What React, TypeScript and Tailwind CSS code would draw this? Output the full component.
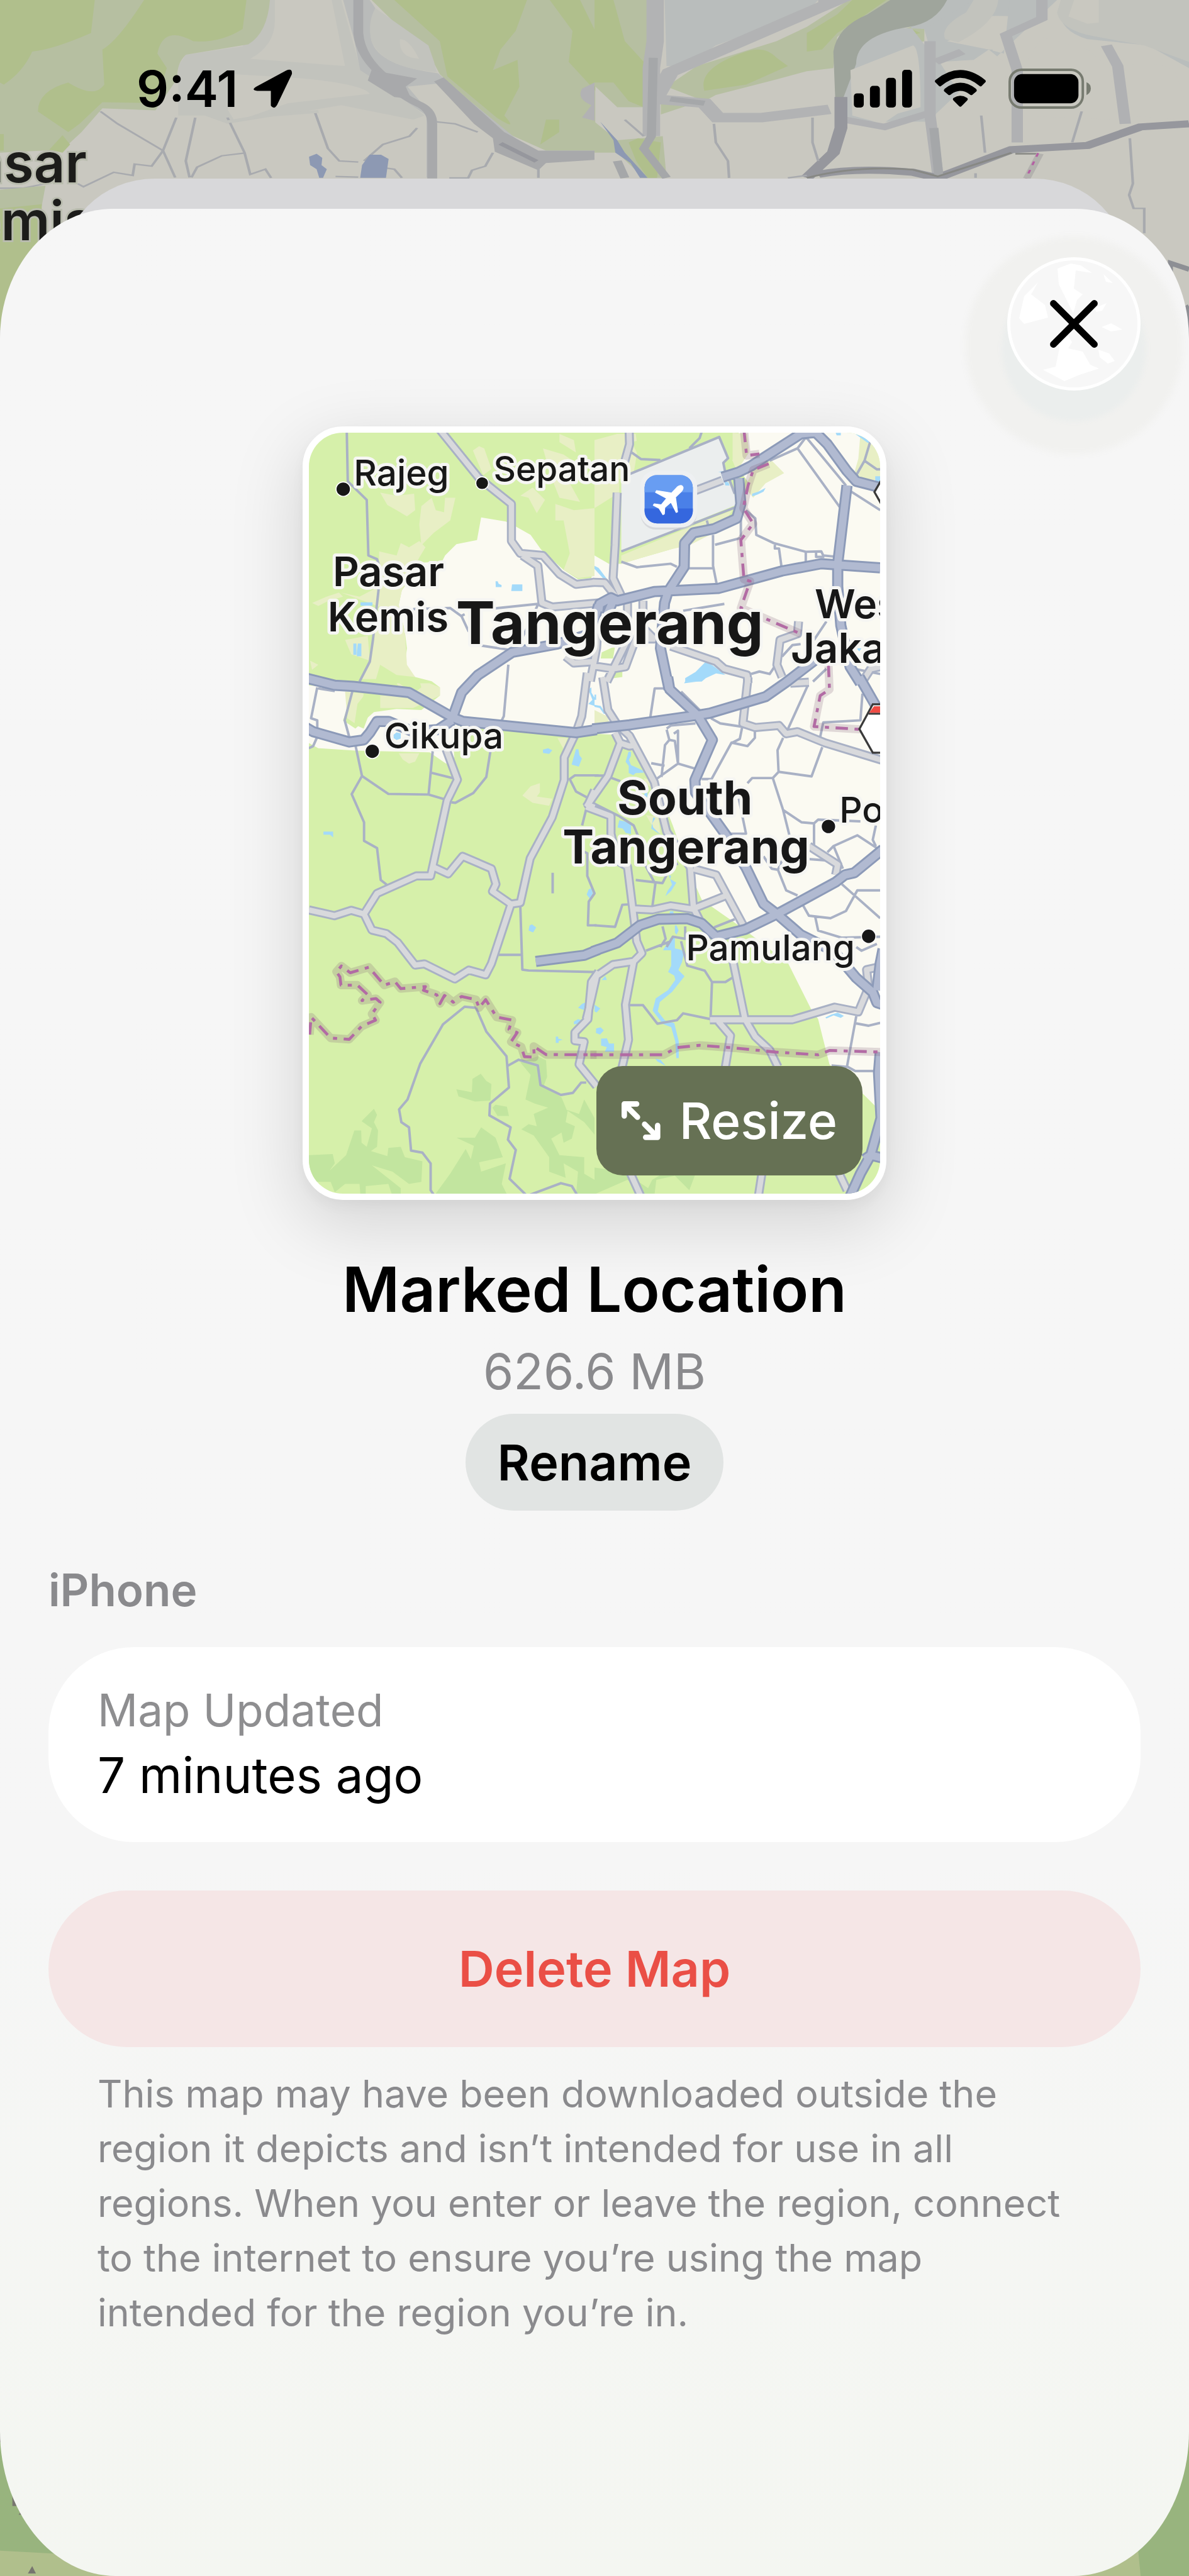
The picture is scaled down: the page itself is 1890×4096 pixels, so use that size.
import { X } from "lucide-react";

interface Tile {
  x: number;
  y: number;
  lanes?: string;
  streets?: string;
  highways?: string;
  border?: string;
  water?: string;
}

// The map is split into six tiles, each with its own origin.
const tiles: Tile[] = [
  {
    x: 0,
    y: 0,
    lanes:
      "M238 40L243 290L335 380L343 650L385 668L395 700L392 820L365 1060L350 1165L300 1262M560 910L740 905L795 945L830 1020M790 945l20-10M880 1070L895 1088L1030 1108M945 908L1165 885M1165 890L1080 1070M1022 1180L1015 1260L1000 1430L985 1460",
    streets:
      "M690 40L880 275L1037 400V580L1080 640L1190 650L1270 740L1350 790L1440 780M1090 650L1165 700L1185 880L1235 900L1460 880M1300 1140L1340 1172L1440 1165",
    highways: "M750 1440L795 1315L875 1230L1040 1120L1260 1080L1420 1030L1460 890",
    water:
      "M960 775l10 0l5 12l14 6v10h-28zM1040 790h50v32h-54zM305 877h58v16h-58zM270 1077h15v55h-15zM292 1077h17v62h-22v-20z",
  },
  {
    x: 1440,
    y: 0,
    lanes:
      "M170 255L605 75L648 178L625 200L635 250M130 630L700 410M180 150L225 182L320 187M520 50L510 80L460 130M850 190L985 130L1030 70M985 130L1190 415M1030 80L1220 310M1340 90L1310 190L1270 260M1310 190L1370 232H1386M1245 340L1386 430M575 550V700L595 800M545 480l8 30M585 598L710 565M710 430V560M735 430L780 470L785 550L870 590L1025 632L1100 630L1110 650L1160 655M875 598v18h20L908 710M1025 632V690M1075 635v22h40M130 680L205 707L370 690L400 705M450 712H575M430 918L630 885M1125 970L1065 1060M910 1140L960 1085L1000 1080M760 1225L800 1213L850 1225L880 1180M1125 1200L1060 1262M1260 1200L1386 1225M650 270L680 350",
    streets:
      "M168 40L170 110L145 200M110 345L100 600L90 760L130 845M-10 780L50 782L100 845M490 335L620 285M370 1090L590 1165L630 1200L740 1230L745 1270M990 970L985 1030L900 1060L885 1180L910 1240M235 870V1000L290 1055H200L150 1190L90 1200L-10 1185M160 880V1060L60 1262M20 940L10 1100L-20 1260M1386 1190L1340 1200L1300 1262",
    highways:
      "M360 820L435 705L437 590L480 540L580 520L690 470L710 400L700 275M620 270L700 245L760 215L1000 60L1100 50M1060 40L1130 110L1225 240L1270 290L1386 320M1225 310L1205 480L1180 690V800L1195 990L1240 1190L1290 1270M20 920L25 885L80 855L110 870L290 825L600 810L910 725L1100 690L1386 710M360 815L340 880L320 1100L362 1300M90 870L60 940",
    border:
      "M725 40L738 165L800 157M845 205L770 235L745 310L722 420L770 495L710 575L725 765L755 775L710 905L1000 1030M1135 1180L1140 1300L1095 1330L1065 1480L1290 1494",
    water:
      "M0 700L20 710L65 770H50L0 715ZM1170 55h25v12h-20zM1265 60l80 30l10 15l-30-2zM1362 265h24v28h-24zM765 350l30-10l35-18l-10 18l-30 15l-25 8zM600 245l40-8v12zM630 290l20 5l5 15h-20zM440 1245L490 1215L540 1165L575 1185L635 1230L590 1222L540 1245L520 1262H440ZM1270 1100h25l-10 15z",
  },
  {
    x: 0,
    y: 1260,
    lanes:
      "M95 30L65 180L95 190V270L75 315L54 325M100 35L180 48M265 50L228 190L250 270M280 310L312 460L440 547L635 550L720 575M312 460L262 548L322 685V775L385 810L403 965L435 990M655 340L635 550M650 445L760 472M935 340L915 465L852 543L765 590L745 588M1237 930V1030M1460 457H1345L1320 475L1350 535L1405 565M1400 620L1380 700M1385 825L1405 835V945L1440 1030L1412 1070L1408 1185H1450M1080 1090L1090 1400L1120 1404L1460 1412M975 1328H1088",
    streets:
      "M720 330L775 478L725 580L645 945H575L385 1030L322 1130L260 1112L178 1138L54 1110M322 1130L360 1208L430 1225L485 1268L570 1378L615 1372L762 1445L830 1402L912 1425L940 1370L1035 1082M655 900L730 935L800 850L940 910L962 985L945 1020L1035 1082L1080 1075L1128 860L1235 660L1293 480V370L1350 250L1378 170L1405 -40M1440 530L1408 600L1440 612",
    highways:
      "M40 -15L180 20L270 25L540 55L750 175L800 195L1350 250L1450 235M40 225L75 245L250 295L320 285L350 250L385 195L440 195L560 245L680 235L750 190M1155 1360L1390 1330L1460 1302",
    water:
      "M465 260l15-12l20 5v25l-20 8l-15-10zM1190 332l25-7l20 10l-15 18l-30-5zM1350 330h12l5 30l12 15l-15 40l-35-10zM1410 40l15-10v25l15 25v40l-30-10l20-20zM125 730h47v28l-15-13h-32zM1412 1010l12-5l8 25l-15 25l-15-20zM1125 1185l12-5l20 15l-15 25l-22-10z",
  },
  {
    x: 1440,
    y: 1260,
    lanes:
      "M270 180L292 35H345M420 50L510 140M350 230L370 215L490 205M350 235L363 285L342 310L325 465M363 285L390 290L405 400M405 400V240L385 255M405 400L300 475M405 400L490 425M275 398L340 410M565 180L610 205L710 220M718 215L705 280L665 300M778 235V275L742 315L665 298L568 475H520M935 240L1035 20M1300 60L1290 190L1110 200L1095 270M915 275L888 335L893 440L1053 462L1105 320M893 440L865 470H765L742 495M865 470L915 625L945 745M915 625L1005 685L1065 690V800M1065 690L1085 672L1290 680M1365 700L1350 770L1365 800M1130 830L1160 800L1275 748L1386 820M1160 800L1205 910M700 570L735 740H650M890 915L930 1015L985 1040M1000 860L1130 870M820 850L860 910L890 915L910 870M1200 985L1386 1150M1386 1015H1275L1220 1115L1145 1150L1040 1138L1010 1085M1070 1140L1085 1210L1200 1245L1386 1240M0 458H60M70 465L125 485M0 595L120 655L190 700L215 760M245 890L295 985L280 1100M200 965L330 980L370 900L405 885M0 1185L100 1192L135 1085L190 1082M330 1190L345 1250L320 1290M440 1190V1250L380 1240L350 1290M580 1195L680 1155M370 1262L250 1308M420 1262L450 1380L535 1405L570 1460H635L675 1435M570 1460L563 1640L430 1612L400 1645L305 1662L235 1572H170",
    streets:
      "M40 -20L65 140L110 210L170 265L290 490L350 730L465 905L480 1100L515 1170M-40 610L65 460L125 300L100 250M125 300L170 315L200 310M-40 610L80 655V740L110 870L160 900L185 1100L205 1262L230 1320L190 1360L150 1570L165 1740L130 1890M480 910L590 940L730 1200M490 1100L640 1040M190 1105L280 1110L370 1090L500 1110M745 -20L720 205L780 225L895 215L930 255L985 245L1120 300L1400 385M950 10L1040 5M1040 800L1180 890L1170 940M190 1360L90 1375L10 1430L-15 1540L-40 1640",
    highways:
      "M355 -20L365 40L500 165L572 285L487 480L490 540L640 750L735 905L820 1080L885 1130L1000 1230L1160 1310L1270 1440L1350 1510L1370 1560L1400 1570M-10 232L170 212L500 165L560 155L830 75L930 5L1080 -110M1285 -20L1365 120M-10 1312L110 1270L220 1185L310 1155L450 1152L520 1175L590 1240L730 1205L885 1130L1170 975L1215 940L1260 930L1400 815",
    water:
      "M165 342h12v20l-10 20l10 25l55 25l8 12l-40 2l-12 10l-22-10v-35l-15-20zM0 115l30 5l25 38h-10l-20-28l-25-5zM0 65h8v25h-8zM245 540h12v25l-18-10zM120 675l25 5l32 12v50l-25-5l-15-22l-25-5zM285 660l10 5l-15 25l5 20l35 35l-45-30zM360 940l12 5l-5 15l30 18l-25 40l-28 25l10-25l22-30zM365 1117h18v18h-18zM390 1185l8 0l10 25l-10 20l-8-10zM370 1245l20-8v60l25 5l20 10l-10 50l-18 40l30 30l-60 75l-60 50l-10 45l35 45l45 12l22 90v80h-12l-5-80l-20-70l-40-15l-50-65l15-60l60-40l35-50l-5-20l-30-18l15-30v-75h-40zM510 0h-70l-5 10z",
  },
  {
    x: 0,
    y: 2520,
    lanes:
      "M865 325L810 320L705 405L595 595L533 770L492 818L503 880L540 905L550 1018L605 1028L645 1080V1210L665 1240M865 325L915 440L1013 560L1025 712L933 790L930 847L1033 905L1020 965L1058 1015L1028 1155L1115 1240M1018 607L1072 577L1165 605L1178 700L1277 748L1335 738L1375 688H1400M1120 1235L1277 1176L1330 1190L1360 1240",
    streets: "M1460 150L1425 200L1408 380L1345 445V485L1390 490L1365 600L1450 705",
    border:
      "M58 455L65 370L160 472L250 478L310 415L378 385L360 355L400 298L380 280L312 290L340 262L290 215H210L205 175L188 150L212 122L255 155L345 128L420 215L472 198L500 232L620 222L610 240L675 262L690 305L712 265L755 298L795 270L865 285L880 325L912 285L965 370L1040 385L1025 430L1065 445L1035 490L1085 515L1100 562L1148 565L1145 512L1205 552L1450 553",
    water:
      "M1360 325l20-20l15-5v15l-8 20zM1340 392l20-12l15 5l-15 18l-20 2zM1252 465h12v10l22 5l-20 5v10h-14z",
  },
  {
    x: 1440,
    y: 2520,
    lanes:
      "M1270 30L1295 48L1370 15M1386 398L1330 412L1265 400M1270 365L1225 610L1265 632L1386 632M1150 605L1225 612M0 150L20 160L0 200",
    streets:
      "M670 90L730 380L780 465L850 530L890 612M560 383H960L1165 322L1280 345L1330 225L1320 140L1386 125M600 390L660 460L635 612M175 1130L225 1240M812 1130L795 1240M1185 1125L1225 1210",
    highways:
      "M1400 40L1386 110L1370 240M1386 540L1378 640L1390 860L1340 1040L1290 1130L1240 1240M1310 1060L1340 1040L1400 1055",
    border:
      "M-20 553H335L400 518L510 507L680 520L880 540L1085 553L1140 532L1400 540",
    water:
      "M35 190h25l-8-20zM0 310l28 18l-18 20l-10-5zM8 425l22-5l15 15l-18 20l-20-8zM32 475l28-2l10 25h25v40h-45l10-22l-28-8zM295 572l25 5l25 30l-40-22zM1120 372l30-15l30-8l30 15l-15 10l-35-12l-35 15zM1350 195l36 25v12zM1340 150l45-5v18z",
  },
];

const greens =
  "M890 465L1010 485L1060 510L1130 550L1180 620L1290 720L1360 765L1425 760L1440 650L1510 690L1570 690L1810 620L1900 590L2030 520L2140 440L2190 300L2110 190L2140 54H2850V3420L2800 3320L2740 3260L2580 3120L2550 3000L2525 2900L2490 2850L2380 2630L2160 2460L1960 2320L1890 2160L1820 1960L1740 1760L1690 1700L1630 1600L1570 1570L1540 1520L1440 1515L1350 1515L790 1460L750 1500L760 1630L720 1660L640 1605L280 1597L100 1585L54 1560V1280L270 1300L220 1450L280 1490L370 1410L480 1395L600 1400L690 1330V1290L650 1260L570 1240L520 1180L530 1100L520 1020L490 890L505 820L600 685L700 680L715 650L770 595L870 575Z";

const beiges =
  "M400 345L480 360L565 350L570 430L530 460L480 430L435 405ZM600 410L650 370L670 430L710 440L715 370L765 370L740 480L660 540L600 600L590 500ZM395 630L480 650L500 590L540 610L590 580L620 610L590 660L505 820L490 890L520 1020L530 1180L570 1240L480 1230L400 1180L380 1250H300L350 1165L365 1060L400 900L210 830L300 850L395 800ZM850 140L880 120L905 130L940 230L900 260ZM1270 60L1340 90L1350 150L1270 100ZM1190 130L1290 160L1350 200L1320 300L1370 390L1270 370L1230 270ZM1080 360L1140 320L1200 380L1160 445L1120 370ZM1250 400L1340 430L1440 420V750L1360 760L1290 720L1320 640L1290 480H1250ZM70 880L140 850L200 830L220 850L150 870L100 895ZM230 1060L340 1040L350 1160L260 1130ZM60 1160L100 1180L70 1205ZM1440 90L1550 60L1640 60L1650 130L1630 250L1560 280L1560 345L1440 420ZM1570 650L1810 550L1980 480L2110 430L2040 530L1900 600L1810 620L1570 690ZM2110 54L2180 60L2190 150L2130 240L2110 190ZM2230 190H2300L2360 250L2270 300L2210 370L2170 320ZM2730 60L2826 150V280L2760 290L2700 250L2720 180ZM1440 1400L1500 1430L1520 1480L1440 1470ZM230 1310L320 1320L300 1480L240 1440ZM400 1330L520 1330L480 1270H640L690 1290V1330L560 1390L400 1390ZM490 1610H590L570 1650L540 1660L510 1640ZM1260 1535H1310L1290 1590ZM1090 1815L1130 1770L1175 1755V1800L1160 1820L1235 1830L1220 1865L1140 1850ZM1680 1730L1715 1740L1740 1790L1690 1760ZM1690 1910L1750 1920L1760 2000L1730 1980Z";

const woods =
  "M770 3240L845 3255L848 3190L888 3165L915 3200L940 3215L935 3295L860 3300L780 3275ZM770 3475L860 3475L890 3425L960 3475L995 3570L880 3595L890 3640L1010 3600L990 3700L1020 3760H660L740 3650L815 3530L840 3580L855 3515ZM54 3560L170 3555L180 3600L155 3635L235 3560L275 3440H308L310 3500L335 3520L360 3430L310 3395L370 3335L385 3365L370 3400L390 3440L385 3520L355 3540L435 3565L440 3525L500 3520L520 3570L605 3590L600 3690L540 3700L460 3640L360 3610L500 3720V3760H460L440 3700L330 3710V3760H305L300 3700H230L180 3740L160 3690H90L54 3650ZM1080 3110L1165 3080L1205 3100L1210 3180L1195 3220L1280 3280L1305 3340L1365 3360L1390 3290L1440 3380V3460L1390 3400L1310 3345L1300 3400L1345 3420L1330 3480L1290 3500L1280 3450L1230 3480L1270 3560L1390 3570V3650L1440 3680V3760H1350L1360 3640L1290 3600L1300 3670L1220 3640V3570L1170 3500L1145 3465L1085 3435L1120 3410L1160 3420L1145 3360L1215 3330L1150 3310L1105 3290L1130 3170ZM945 3330L960 3315L1015 3325L1025 3370H970ZM1440 3620L1580 3640L1700 3720L1720 3680L1770 3650H1930L1900 3730L1830 3660L1740 3680L1730 3760H1700L1600 3680L1440 3750Z";

const places = [
  { name: "Rajeg", x: 272, y: 310, size: 173, weight: 500 },
  { name: "Sepatan", x: 950, y: 290, size: 168, weight: 500 },
  { name: "Pasar", x: 170, y: 800, size: 198, weight: 600 },
  { name: "Kemis", x: 145, y: 1018, size: 198, weight: 600 },
  { name: "Tangerang", x: 768, y: 1080, size: 284, weight: 700 },
  { name: "Wes", x: 2508, y: 955, size: 194, weight: 600 },
  { name: "Jakarta", x: 2392, y: 1170, size: 200, weight: 600 },
  { name: "Cikupa", x: 420, y: 1585, size: 173, weight: 500 },
  { name: "South", x: 1550, y: 1908, size: 228, weight: 700 },
  { name: "Tangerang", x: 1285, y: 2146, size: 228, weight: 700 },
  { name: "Pondok", x: 2628, y: 1945, size: 173, weight: 500 },
  { name: "Pamulang", x: 1884, y: 2614, size: 173, weight: 500 },
];

const dots = [
  [221, 328, 35],
  [895, 299, 31],
  [362, 1600, 35],
  [2575, 1965, 35],
  [2770, 2498, 35],
];

function Roads({ kind, color, width }: { kind: "lanes" | "streets" | "highways"; color: string; width: number }) {
  return (
    <g fill="none" stroke={color} strokeWidth={width} strokeLinejoin="round">
      {tiles.map((tile) => (
        <path key={`${tile.x}-${tile.y}`} d={tile[kind]} transform={`translate(${tile.x} ${tile.y})`} />
      ))}
    </g>
  );
}

function RegionMap() {
  return (
    <svg
      className="block size-full"
      viewBox="54 54 2772 3693"
      preserveAspectRatio="xMidYMid slice"
      role="img"
      aria-label="Tangerang"
    >
      <rect width="2900" height="3800" fill="#d6f0aa" />
      <path d={greens} fill="#fbfaf2" />
      <path d={beiges} fill="#e8efc5" />
      <path d={woods} fill="#c2e59f" />
      <path d="M1570 270L2045 75L2088 178L2065 200L2080 270L2140 400L1570 630Z" fill="#ebeeee" />
      <path d="M1620 100L1780 60H1960L1940 110L1780 170L1660 180ZM1970 2350L2060 2400L2130 2450L2020 2470ZM1475 1120L1540 1090L1530 1150H1470ZM1520 1190L1575 1180V1240L1500 1250ZM290 1370L330 1320L400 1330V1390L350 1410L320 1490L275 1470ZM480 1260L590 1255L600 1290L560 1320Z" fill="#d6f0aa" />
      {tiles.map((tile) => (
        <path key={`${tile.x}-${tile.y}`} d={tile.water} transform={`translate(${tile.x} ${tile.y})`} fill="#a3dafa" />
      ))}
      <Roads kind="lanes" color="#a9b1c5" width={12} />
      <Roads kind="streets" color="#a9b1c5" width={44} />
      <Roads kind="streets" color="#d8d9dc" width={26} />
      <Roads kind="highways" color="#8c9ab8" width={54} />
      <Roads kind="highways" color="#b1bad1" width={36} />
      <g fill="none" strokeLinejoin="round">
        {tiles.map((tile) => (
          <g key={`${tile.x}-${tile.y}`} transform={`translate(${tile.x} ${tile.y})`}>
            <path d={tile.border} stroke="#78506e" strokeOpacity="0.2" strokeWidth="40" />
            <path d={tile.border} stroke="#b26ba4" strokeWidth="14" strokeDasharray="60 32 20 32" />
          </g>
        ))}
      </g>

      {/* road shields */}
      <g stroke="#3a3a3a" strokeWidth="10" fill="#fff">
        <path d="M2840 1372H2790L2725 1492L2790 1607H2840Z" />
        <path d="M2840 270L2798 342L2840 415Z" />
      </g>
      <path d="M2826 1382H2796L2772 1414H2826Z" fill="#ef4b44" />
      <path d="M2770 1418H2826" stroke="#3a3a3a" strokeWidth="9" />

      {/* airport */}
      <rect x="1664" y="242" width="272" height="282" rx="74" fill="#c9cbd0" opacity="0.6" />
      <rect x="1662" y="238" width="276" height="276" rx="76" fill="#eef0f2" />
      <rect x="1683" y="260" width="234" height="234" rx="60" fill="#4a80e8" />
      <path d="M1683 343V320a60 60 0 0 1 60-60h114a60 60 0 0 1 60 60v23z" fill="#689df2" />
      <path d="M1683 422v12a60 60 0 0 0 60 60h114a60 60 0 0 0 60-60v-12z" fill="#3567de" />
      <path
        transform="translate(1440 0)"
        d="M427 314c-7-7-18-4-27 5L374 347L301 335L296 344L350 373L324 404L290 399L285 406L313 421L332 452L339 448L341 417L371 391L396 441L403 438L393 367L420 341C429 332 433 320 427 314Z"
        fill="#fff"
        stroke="#fff"
        strokeWidth="4"
        strokeLinejoin="round"
      />

      {dots.map(([x, y, r]) => (
        <circle key={`${x}-${y}`} cx={x} cy={y} r={r} fill="#171717" stroke="#fff" strokeWidth="5" />
      ))}
      <g
        fill="#171717"
        stroke="#f6f6f3"
        strokeWidth="30"
        strokeLinejoin="round"
        paintOrder="stroke"
        fontFamily="Inter, 'Liberation Sans', sans-serif"
      >
        {places.map((place) => (
          <text key={`${place.name}-${place.y}`} x={place.x} y={place.y} fontSize={place.size} fontWeight={place.weight}>
            {place.name}
          </text>
        ))}
      </g>
    </svg>
  );
}

function Backdrop() {
  return (
    <svg
      className="absolute inset-0 size-full"
      viewBox="0 0 1920 4162"
      preserveAspectRatio="xMidYMin slice"
      aria-hidden="true"
    >
      <rect width="1920" height="2000" fill="#c9c8c0" />
      <rect y="2000" width="1920" height="2162" fill="#98b47e" />
      <path d="M0 4162V4120L90 4125L160 4162ZM95 4122L120 4112L210 4162H95ZM1700 4162L1835 4090L1842 4162Z" fill="#b0bf8c" />
      <path d="M1715 4140L1730 4175" stroke="#96979d" strokeWidth="16" />
      <path d="M1620 4162L1665 4155V4162ZM310 4162L400 4160V4162Z" fill="#8d99b3" />
      <path d="M0 3925L7 3930V3945H0ZM20 4030L30 4048H20ZM42 4048L46 4062H30ZM52 4145L58 4157H45Z" fill="#77756f" />
      <g transform="scale(.61224 .33333)" fill="none">
        <path d="M470 320L490 265L640 225L710 0H900L950 330L1060 470L1120 560L1090 580L900 510L600 600L540 560L470 560Z" fill="#c2c3bd" />
        <path d="M725 0H875L910 320L660 285Q725 220 725 100ZM600 530L620 360L800 380Q960 410 975 455L760 500L620 590Z" fill="#c9c8c0" />
        <path d="M0 0H712Q705 160 655 215L490 265Q465 310 468 380L410 535L270 525L215 640L165 725L0 740Z" fill="#b6bfa1" />
        <path d="M0 0H250L240 160Q140 240 85 250Q60 350 10 410L0 400ZM380 0H650L640 140Q580 210 510 200Q430 120 415 260L440 330L410 500L270 495L210 600L180 640L100 540Q100 440 180 400Q250 480 275 410L270 240Q310 200 380 0ZM0 650H10V730H0ZM130 725L165 655L185 700L165 740Z" fill="#b0bf8c" />
        <path d="M980 0L1140 290L1160 360L1330 640L1440 730H1570V0Z" fill="#b6bfa1" />
        <path d="M1040 0H1390L1360 150L1320 240L1300 340L1365 290L1370 420L1330 560Q1370 640 1310 570L1180 370L1160 200ZM1450 0H1530L1570 150V440L1500 300L1510 150ZM1440 580H1475V640L1425 700Z" fill="#b0bf8c" />
        <path d="M905 0H975L990 40Q970 120 980 200Q1000 320 1155 355L1330 640L1420 760L1180 400L1075 420L1140 560V860H1125V560L1000 400L950 340L935 200Z" fill="#b9bbba" />
        <path d="M990 40L1130 220L1145 300L1152 350Q1010 330 980 200Q968 110 990 40Z" fill="#c2c3bd" />
        <path d="M1055 190Q1080 190 1105 285Q1050 280 1055 190Z" fill="#c9c8c0" />
        <path d="M945 0V160Q950 280 1020 380Q1040 450 1110 510Q1140 540 1140 600V865" stroke="#a8a9ab" strokeWidth="26" />
        <path d="M980 340L1100 380L1070 420L1085 480L1040 470L970 390ZM1145 395L1170 375L1330 640L1420 730H1568V775L1440 790L1420 825L1305 735L1300 670L1250 600Z" fill="#a8a9ab" />
        <path d="M1320 695L1415 782" stroke="#96979d" strokeWidth="16" />
        <path d="M265 540L310 600L430 730L462 860M465 570L430 730L400 805L355 795L350 850L300 835L220 905L205 890M0 912H60L120 890M515 570L490 780L500 860M600 570L645 740L660 845L700 820L715 862M645 742L585 755L520 810L505 860M830 540L865 720L895 780L945 785M1100 620L1080 660L1010 700L960 780M885 855L945 858M1020 815L1040 820L1060 862M1185 862H1235L1245 825L1280 805L1300 740M1420 820V862M1150 590L1200 600L1260 640" stroke="#a8aaae" strokeWidth="7" />
        <path d="M600 590L700 560L840 540" stroke="#c2c3bd" strokeWidth="14" />
        <path d="M815 760L835 745L850 765L848 800L862 820L852 862H842L835 820L818 800ZM955 800L975 750L1005 750L1025 770L1018 862H950Z" fill="#8d99b3" />
        <path d="M0 920L120 900L110 1000L0 1020Z" fill="#b6bfa1" />
        <path d="M0 1010L110 990V1200L0 1260Z" fill="#b0bf8c" />
        <path d="M0 1180H110V1600H0Z" fill="#b0bf8c" />
        <path d="M1535 430Q1520 480 1560 510L1535 570L1568 585V400Z" fill="#b2b2b4" />
      </g>
      <g transform="translate(960 0) scale(.61224 .33333)" fill="none">
        <path d="M0 0H140V520H60L0 415ZM0 590L60 680L180 660L190 862H130L60 740H0Z" fill="#b6bfa1" />
        <path d="M0 0H50L80 200L130 300V520L90 490L50 400L0 400ZM115 670L175 690L170 780L165 862H140L110 780L90 690Z" fill="#b0bf8c" />
        <path d="M185 0H590L560 60L320 220L240 320L190 320Z" fill="#b9bdbc" />
        <path d="M670 0H780Q760 60 700 90L640 180L630 330L560 345L480 385L320 460L290 490L190 420L270 320L480 200L560 130ZM690 300Q690 200 835 130L870 140V200L780 240ZM175 500L210 495L240 515L175 555Z" fill="#b6bfa1" />
        <path d="M680 0H770L700 90L640 160L600 240L560 250V160L640 70ZM290 440Q270 330 400 250Q450 220 480 280L510 320L400 410ZM700 250Q730 180 835 140L860 160Q760 200 700 270Z" fill="#b0bf8c" />
        <path d="M780 0H1120L1110 80Q930 60 920 170Q920 220 980 240L1050 240V330H900L870 140L800 135Q640 200 645 480Q650 600 720 590H890L880 240Z" fill="#b9bdbc" />
        <path d="M890 570L885 240L870 140L1000 0H1060Q1060 120 930 200L1040 240L1080 260L1095 0H1230Q1210 140 1300 190L1460 220L1568 330V0H1220V0Z" fill="#b9bdbc" />
        <path d="M780 0H930Q900 110 830 130Q690 170 690 310L655 480H635L630 250Q640 130 720 70Z" fill="#9fa59c" />
        <path d="M1230 0H1568V300L1450 220L1330 180Q1230 150 1220 60ZM1000 0H1065Q1060 110 960 205L925 190Q910 130 980 60Z" fill="#c2c3bd" />
        <path d="M1265 0H1330V110L1300 115L1250 80Z" fill="#c9c8c0" />
        <path d="M675 340L840 220Q860 230 860 520L800 550L760 600L680 560ZM910 300L1000 290L1040 240L1080 300L1095 560L1000 560ZM1130 330L1180 180L1300 240L1360 330L1375 580L1110 560ZM1400 320Q1480 290 1530 340L1568 540V580L1400 560Z" fill="#c9c8c0" />
        <path d="M160 0V200L150 330V660M590 0L640 0L200 350L160 480L290 500L325 570L440 570L620 530" stroke="#b2b3b4" strokeWidth="46" />
        <path d="M155 280L150 660L130 720L190 862M200 480L290 500M60 780L80 862" stroke="#a5a7a9" strokeWidth="24" />
        <path d="M1180 0V90L1085 170L1115 340V690M885 200V560L905 840M660 580L765 615L880 550M1350 220L1380 320L1400 600M900 300L970 250" stroke="#b0b1b3" strokeWidth="30" />
        <path d="M650 470L650 620L630 740L560 862M590 845Q690 810 840 835L905 862L1100 725L1300 705L1440 615L1568 600" stroke="#96979d" strokeWidth="34" />
        <path d="M895 620L908 850" stroke="#a5a7a9" strokeWidth="24" />
        <path d="M560 862Q690 800 840 822L905 855L1100 740M1110 745H1170" stroke="#878884" strokeWidth="8" />
        <path d="M315 600L320 690L352 780L355 862M575 570V690L590 780M1020 560L1030 740M1285 540L1260 690M1412 670L1420 890L1410 945L1422 1010H1450V1130M510 862L560 850M1005 840V862M80 580L130 660" stroke="#a8aaae" strokeWidth="7" />
        <path d="M1175 745L1140 865" stroke="#b3b2ae" strokeWidth="20" />
        <path d="M1170 742L1138 865" stroke="#b45fa3" strokeWidth="6" strokeDasharray="18 24" />
        <path d="M15 590L60 680L80 740L105 790L140 862H120L95 790L55 740L50 680Z" fill="#8d99b3" />
      </g>
      <path d="M1890 455V425L1920 435M1895 510L1920 495M1918 500V560" stroke="#8d8f94" strokeWidth="8" fill="none" />
      <g fontFamily="Inter, 'Liberation Sans', sans-serif" fontSize="88" fontWeight="600" fill="#1c1c1a" stroke="#b9bcae" strokeWidth="6" paintOrder="stroke">
        <text x="140" y="295" textAnchor="end">Pasar</text>
        <text x="152" y="388" textAnchor="end">Kemis</text>
      </g>
    </svg>
  );
}

function StatusBar() {
  return (
    <header className="flex h-[284px] items-start justify-between pt-[92px] pr-[156px] pl-[217px]">
      <div className="flex items-center gap-6">
        <time className="text-[80px] leading-[98px] font-semibold">9:41</time>
        <svg className="h-[62px] w-[63px]" viewBox="0 0 64 63" aria-hidden="true">
          <path d="M6 28L54 2Q64-2 63 8L39 58Q34 66 29 59V35H7Q-4 34 6 28Z" />
        </svg>
      </div>
      <div className="flex h-[98px] items-center gap-9">
        <svg className="h-[60px] w-[93px]" viewBox="0 0 94 61" aria-hidden="true">
          <rect y="38" width="16" height="23" rx="5" />
          <rect x="26" y="26" width="16" height="35" rx="5" />
          <rect x="52" y="13" width="16" height="48" rx="5" />
          <rect x="78" width="16" height="61" rx="5" />
        </svg>
        <svg className="h-[60px] w-[81px]" viewBox="0 0 82 60" aria-hidden="true">
          <path d="M1 16Q41-16 81 16Q83 18 81 20L75 26Q73 27 71 25Q41 0 11 25Q9 27 7 26L1 20Q-1 18 1 16ZM16 30Q41 11 66 30Q69 33 66 35L60 40Q58 41 56 39Q41 28 26 39Q24 41 22 40L16 35Q13 33 16 30ZM30 45Q41 38 52 45Q54 47 52 49L43 58Q41 60 39 58L30 49Q28 47 30 45Z" />
        </svg>
        <svg className="h-[64px] w-[131px]" viewBox="0 0 133 65" aria-hidden="true">
          <rect x="2" y="2" width="118" height="61" rx="19" fill="none" stroke="#777b70" strokeWidth="4" />
          <rect x="9" y="9" width="104" height="47" rx="13" />
          <path d="M126 22Q133 25 133 32T126 43Z" fill="#777b70" />
        </svg>
      </div>
    </header>
  );
}

function CloseButton() {
  return (
    <button
      type="button"
      aria-label="Close"
      className="relative flex size-[212px] items-center justify-center rounded-full border-[5px] border-white bg-[#f7f7f7] shadow-[0_40px_8px_9px_#ebeeed,0_34px_12px_67px_#f1f1ef]"
    >
      <svg className="absolute inset-0 size-full" viewBox="0 0 202 202" fill="#fff" aria-hidden="true">
        <path d="M75 13L96 5L112 8L130 20L104 16L101 45L115 54L106 63L100 84L88 60L77 38ZM44 35L33 54L55 71L60 91L22 101L14 92L22 57ZM92 120L98 130L92 140L115 145L127 166L141 172L110 182L86 192L52 174L72 169L78 140L74 117ZM140 142L157 148L166 160L155 164L142 154ZM145 106L160 100L178 110L160 113ZM148 22L163 36L152 34ZM133 76L153 68L146 80L137 82Z" />
      </svg>
      <X className="relative size-[130px] text-black" strokeWidth={2} />
    </button>
  );
}

export default function App() {
  return (
    <div className="relative flex min-h-screen flex-col overflow-hidden bg-[#98b47e] font-[Inter,'Liberation_Sans',sans-serif] text-black">
      <Backdrop />
      <div className="relative flex flex-1 flex-col">
        <StatusBar />
        <div className="mx-[95px] h-[160px] rounded-t-[150px] bg-[#d8d8da]" />

        <main className="relative -mt-[112px] flex flex-1 flex-col overflow-hidden rounded-[180px_180px_184px_184px/206px_206px_230px_230px] bg-linear-to-b from-[#f6f6f6] from-70% to-[#f4f6f1] px-[77px] pt-[77px]">
          <div className="flex justify-end">
            <CloseButton />
          </div>

          <section className="mt-[57px] flex flex-col items-center">
            <div className="relative h-[1230px] w-[928px] max-w-full rounded-[64px] border-[10px] border-white bg-white shadow-[0_34px_110px_10px_rgba(0,0,0,0.13),0_10px_20px_rgba(0,0,0,0.04)]">
              <div className="size-full overflow-hidden rounded-[54px]">
                <RegionMap />
              </div>
              <button
                type="button"
                className="absolute right-[28px] bottom-[29px] flex h-[174px] items-center gap-[30px] rounded-[42px] bg-[#667154] px-10 text-[80px] font-medium text-white"
              >
                <svg
                  className="size-[62px]"
                  viewBox="0 0 186 186"
                  fill="none"
                  stroke="currentColor"
                  strokeWidth="26"
                  strokeLinecap="round"
                  strokeLinejoin="round"
                  aria-hidden="true"
                >
                  <path d="M13 70V13H72M13 13L76 76M172 116V172H115M172 172L110 110" />
                </svg>
                Resize
              </button>
            </div>

            <h1 className="mt-[82px] text-[99px] leading-[120px] font-semibold">Marked Location</h1>
            <p className="mt-[21px] text-[78px] leading-[100px] text-[#8a8a8d]">626.6 MB</p>
            <button
              type="button"
              className="mt-[17px] h-[154px] rounded-full bg-[#e1e4e3] px-[51px] text-[79px] font-semibold"
            >
              Rename
            </button>
          </section>

          <h2 className="mt-[84px] text-[71px] leading-[84px] font-semibold text-[#8a8a8d]">iPhone</h2>
          <dl className="mt-[49px] rounded-[136px] bg-white px-[78px] pt-[58px] pb-[56px]">
            <dt className="text-[71px] leading-[84px] text-[#8e8e90]">Map Updated</dt>
            <dd className="mt-3 text-[78px] leading-[100px]">7 minutes ago</dd>
          </dl>

          <button
            type="button"
            className="mt-[77px] h-[249px] rounded-full bg-[#f5e6e6] text-[79px] font-semibold text-[#ea4f46]"
          >
            Delete Map
          </button>
          <p className="mt-[31px] px-[78px] text-[61px] leading-[87px] text-[#8a8a8d]">
            This map may have been downloaded outside the
            <br />
            region it depicts and isn’t intended for use in all
            <br />
            regions. When you enter or leave the region, connect
            <br />
            to the internet to ensure you’re using the map
            <br />
            intended for the region you’re in.
          </p>
        </main>
      </div>
    </div>
  );
}
